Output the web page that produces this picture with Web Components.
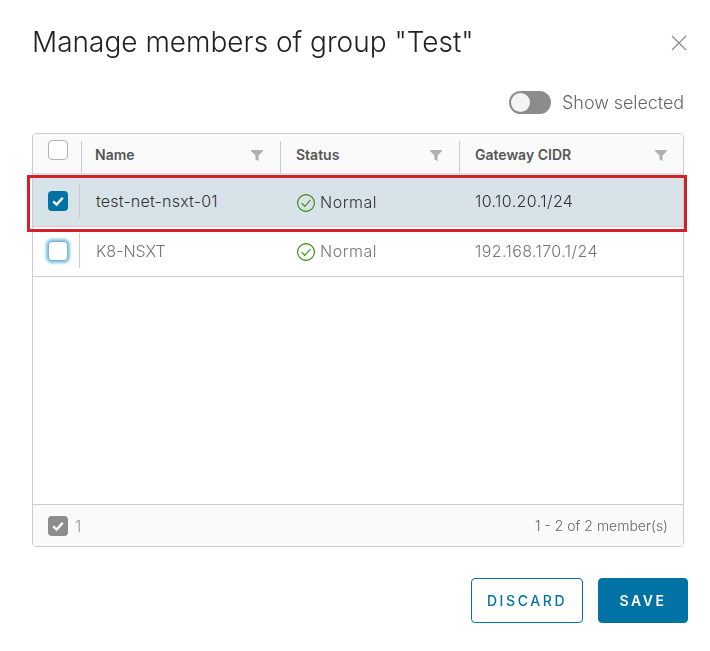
<!DOCTYPE html>
<html lang="en"><head><meta charset="utf-8"><title>Manage members</title>
<style>
html,body{margin:0;background:#fff;}
body{font-family:Inter,"Open Sans","Liberation Sans",sans-serif;}
</style></head><body>
<members-dialog title-text='Manage members of group "Test"'>
  <member-row selected name="test-net-nsxt-01" status="Normal" cidr="10.10.20.1/24"></member-row>
  <member-row focus name="K8-NSXT" status="Normal" cidr="192.168.170.1/24"></member-row>
</members-dialog>
<script>
const CHECK='<svg viewBox="0 0 20 20" width="20" height="20"><path d="M5.2 10.4 8.6 13.6 14.8 6.8" fill="none" stroke="#fff" stroke-width="2.4"/></svg>';
class CheckBox extends HTMLElement{
  connectedCallback(){
    const r=this.attachShadow({mode:'open'});
    r.innerHTML=`<style>
    :host{display:block;width:20px;height:20px;box-sizing:border-box;border-radius:4px;border:1px solid #b3b3b3;background:#fff;}
    :host([checked]){border:0;background:#0072a3;}
    :host([gray]){border:0;background:#8c8c8c;}
    :host([focus]){border:1px solid #7fb2cc;box-shadow:0 0 3px 2px #79c3e4;}
    svg{display:block}
    </style>${this.hasAttribute('checked')?CHECK:''}`;
  }
}
customElements.define('check-box',CheckBox);
class FilterIcon extends HTMLElement{
  connectedCallback(){
    this.attachShadow({mode:'open'}).innerHTML=`<style>:host{display:block;width:12px;height:11px;margin-top:3px}svg{display:block}</style>
    <svg viewBox="0 0 12 11" width="12" height="11"><path d="M0 0H12V1L7.6 5.4V11L4.4 9.4V5.4L0 1Z" fill="#b0b0b0"/></svg>`;
  }
}
customElements.define('filter-icon',FilterIcon);
class StatusIcon extends HTMLElement{
  connectedCallback(){
    this.attachShadow({mode:'open'}).innerHTML=`<style>:host{display:block;width:18px;height:18px;margin-top:2px}svg{display:block}</style>
    <svg viewBox="0 0 18 18" width="18" height="18" fill="none" stroke="#318700" stroke-width="1.1"><circle cx="9" cy="9" r="8.4"/><path d="M4.6 9.2 7.8 12.4 13.4 6"/></svg>`;
  }
}
customElements.define('status-icon',StatusIcon);
class HeadCell extends HTMLElement{
  connectedCallback(){
    this.attachShadow({mode:'open'}).innerHTML=`<style>
    :host{display:flex;align-items:center;justify-content:space-between;box-sizing:border-box;padding:1px var(--pr,17px) 0 var(--pl,16px);position:relative;font-size:14px;font-weight:600;color:#565656;}
    :host::before{content:"";position:absolute;left:0;top:7px;bottom:0;width:1px;background:#ccc}
    </style><slot></slot><filter-icon></filter-icon>`;
  }
}
customElements.define('head-cell',HeadCell);
class MemberRow extends HTMLElement{
  connectedCallback(){
    const sel=this.hasAttribute('selected');
    this.attachShadow({mode:'open'}).innerHTML=`<style>
    :host{display:grid;grid-template-columns:48px 200px 179px 1fr;align-items:center;color:#767676;font-size:16px;font-weight:300;height:49px;box-sizing:border-box;padding-bottom:2px;}
    :host([selected]){background:#d8e3e9;color:#333;height:54px;padding:2px 0 0;border-bottom:1px solid #ecc4c8}
    .c{display:flex;align-items:center;padding-left:15px}
    .cb{height:35px;position:relative}
    .cb::after{content:"";position:absolute;left:46px;top:0;bottom:0;width:1px;background:#ccc}
    .st{gap:5px;padding-left:16px;letter-spacing:.5px}
    :host([selected]) .st{padding-top:2px}
    :host([selected]) .nm{letter-spacing:.2px}
    .ip{letter-spacing:.4px}
    </style>
    <div class="c cb"><check-box ${sel?'checked':'focus'}></check-box></div>
    <div class="c nm">${this.getAttribute('name')}</div>
    <div class="c st"><status-icon></status-icon><span>${this.getAttribute('status')}</span></div>
    <div class="c ip">${this.getAttribute('cidr')}</div>`;
  }
}
customElements.define('member-row',MemberRow);
class ToggleSwitch extends HTMLElement{
  connectedCallback(){
    this.attachShadow({mode:'open'}).innerHTML=`<style>
    :host{display:flex;align-items:center;gap:11px;font-size:18px;font-weight:300;color:#666;letter-spacing:-.08px}
    .t{width:42px;height:23px;border-radius:12px;background:#8c8c8c;position:relative}
    .k{position:absolute;left:2px;top:2px;width:19px;height:19px;border-radius:50%;background:#f4f4f4}
    </style><div class="t"><div class="k"></div></div><slot></slot>`;
  }
}
customElements.define('toggle-switch',ToggleSwitch);
class ActionButton extends HTMLElement{
  connectedCallback(){
    this.attachShadow({mode:'open'}).innerHTML=`<style>
    :host{display:flex;align-items:center;justify-content:center;height:45px;box-sizing:border-box;border-radius:4px;border:1px solid #0072a3;color:#0072a3;background:#fff;font-size:14px;font-weight:500;letter-spacing:2.6px;width:112px}
    :host([primary]){background:#0072a3;color:#fff;width:90px;font-weight:600}
    </style><slot></slot>`;
  }
}
customElements.define('action-button',ActionButton);
class MembersDialog extends HTMLElement{
  connectedCallback(){
    this.attachShadow({mode:'open'}).innerHTML=`<style>
    :host{display:block;height:651px;box-sizing:border-box;padding:25px 22px 0 32px;position:relative;will-change:opacity}
    header{display:flex;justify-content:space-between;align-items:center;height:34px}
    h1{margin:0;font-size:28px;font-weight:300;color:#222;line-height:34px}
    .close{display:block;margin-top:2px}
    .tools{display:flex;justify-content:flex-end;margin:32px 4px 0 0;height:23px;align-items:center}
    .grid{width:652px;height:414px;box-sizing:border-box;margin-top:19px;border:1px solid #ccc;border-radius:4px;display:flex;flex-direction:column;overflow:hidden}
    .head{display:grid;grid-template-columns:48px 199px 179px 1fr;height:39px;background:#fafafa;flex:none}
    .hb{padding:6px 0 0 15px}
    .body{flex:1;border-bottom:1px solid #ccc;}
    .rows{border-bottom:1px solid #ccc;}
    .foot{height:41px;flex:none;background:#fafafa;display:flex;align-items:center;padding:0 15px;gap:7px;color:#999;font-size:16px;font-weight:300}
    .count{flex:1}
    .pg{font-size:14px;color:#666}
    .actions{display:flex;justify-content:flex-end;gap:15px;margin-top:31px}
    .mark{position:absolute;left:27px;top:175px;width:660px;height:57px;box-sizing:border-box;border:3px solid #d3212c}
    </style>
    <header><h1>${this.getAttribute('title-text')}</h1>
    <svg class="close" width="18" height="18" viewBox="0 0 18 18" fill="none" stroke="#8a8a8a" stroke-width="1.2"><path d="M2 2 16 16M16 2 2 16"/></svg></header>
    <div class="tools"><toggle-switch>Show selected</toggle-switch></div>
    <div class="grid">
      <div class="head"><div class="hb"><check-box></check-box></div><head-cell style="--pl:14px">Name</head-cell><head-cell>Status</head-cell><head-cell style="--pr:16px">Gateway CIDR</head-cell></div>
      <div class="body"><div class="rows"><slot></slot></div></div>
      <div class="foot"><check-box gray checked></check-box><span class="count">1</span><span class="pg">1 - 2 of 2 member(s)</span></div>
    </div>
    <div class="actions"><action-button>DISCARD</action-button><action-button primary>SAVE</action-button></div>
    <div class="mark"></div>`;
  }
}
customElements.define('members-dialog',MembersDialog);
</script>
</body></html>
